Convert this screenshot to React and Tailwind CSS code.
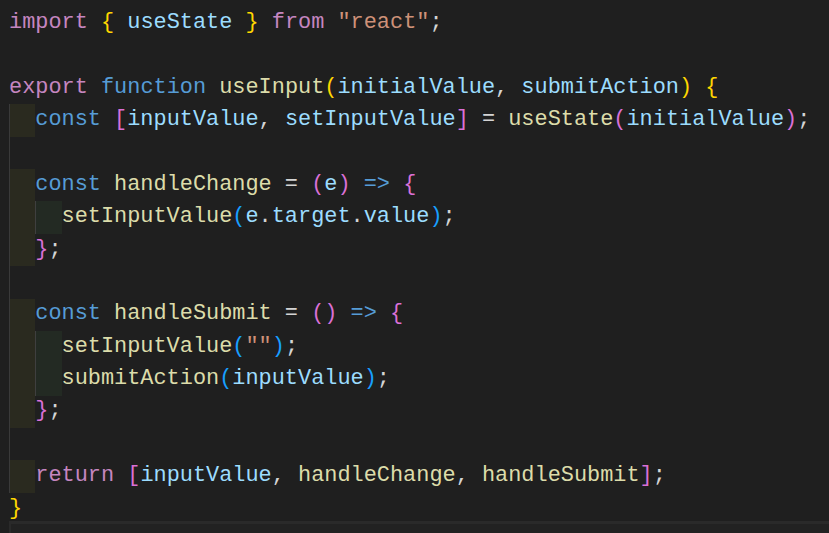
import React from "react";

const KW = "text-[#c586c0]";
const ST = "text-[#569cd6]";
const VAR = "text-[#9cdcfe]";
const FN = "text-[#dcdcaa]";
const STR = "text-[#ce9178]";
const P = "text-[#d4d4d4]";
const B1 = "text-[#ffd700]";
const B2 = "text-[#da70d6]";
const B3 = "text-[#179fff]";

// indent level, then tokens; 0.5 = blank line inside function body (guide only)
const lines = [
  [0, [["import", KW], [" "], ["{", B1], [" "], ["useState", VAR], [" "], ["}", B1], [" "], ["from", KW], [" "], ['"react"', STR], [";", P]]],
  [-1, []],
  [0, [["export", KW], [" "], ["function", ST], [" "], ["useInput", FN], ["(", B1], ["initialValue", VAR], [", ", P], ["submitAction", VAR], [")", B1], [" "], ["{", B1]]],
  [1, [["const", ST], [" "], ["[", B2], ["inputValue", VAR], [", ", P], ["setInputValue", VAR], ["]", B2], [" = ", P], ["useState", FN], ["(", B2], ["initialValue", VAR], [")", B2], [";", P]]],
  [0.5, []],
  [1, [["const", ST], [" "], ["handleChange", FN], [" = ", P], ["(", B2], ["e", VAR], [")", B2], [" "], ["=>", ST], [" "], ["{", B2]]],
  [2, [["setInputValue", FN], ["(", B3], ["e", VAR], [".", P], ["target", VAR], [".", P], ["value", VAR], [")", B3], [";", P]]],
  [1, [["}", B2], [";", P]]],
  [0.5, []],
  [1, [["const", ST], [" "], ["handleSubmit", FN], [" = ", P], ["()", B2], [" "], ["=>", ST], [" "], ["{", B2]]],
  [2, [["setInputValue", FN], ["(", B3], ['""', STR], [")", B3], [";", P]]],
  [2, [["submitAction", FN], ["(", B3], ["inputValue", VAR], [")", B3], [";", P]]],
  [1, [["}", B2], [";", P]]],
  [0.5, []],
  [1, [["return", KW], [" "], ["[", B2], ["inputValue", VAR], [", ", P], ["handleChange", FN], [", ", P], ["handleSubmit", FN], ["]", B2], [";", P]]],
  [0, [["}", B1]]],
];

function Line({ level, tokens }) {
  return (
    <div className="flex h-[32.4px] items-center whitespace-pre">
      {level === 0.5 && <span className="h-full w-[2ch] border-l border-[#3a3a3a]" />}
      {level >= 1 && <span className="h-full w-[2ch] border-l border-[#3a3a3a] bg-[#2a2a1f]" />}
      {level >= 2 && <span className="h-full w-[2ch] border-l border-[#3f3f3f] bg-[#232a23]" />}
      <span>
        {tokens.map(([t, c], i) => (
          <span key={i} className={c || P}>
            {t}
          </span>
        ))}
      </span>
    </div>
  );
}

export default function App() {
  return (
    <div className="flex h-[533px] w-[829px] flex-col overflow-hidden bg-[#1f1f1f] pt-[7px] font-['Liberation_Mono',monospace] text-[21.9px]">
      <div className="pl-[9px]">
        {lines.map(([level, tokens], i) => (
          <Line key={i} level={level} tokens={tokens} />
        ))}
      </div>
      <div className="ml-[9px] mt-[-4px] flex-1 border-l-2 border-t-[3px] border-[#2a2a2a] bg-[#222222]" />
    </div>
  );
}
